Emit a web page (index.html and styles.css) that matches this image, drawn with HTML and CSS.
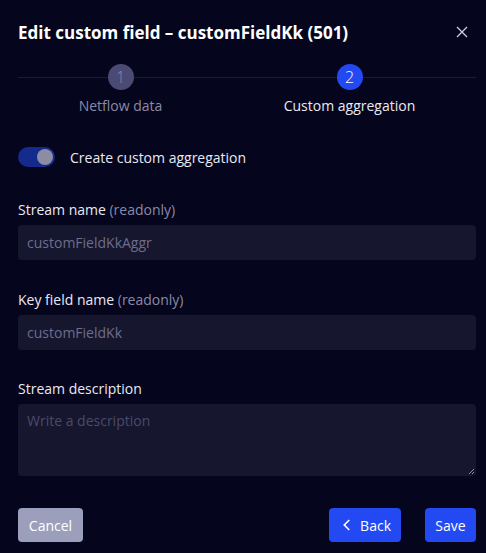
FILE: index.html
```html
<!DOCTYPE html>
<html>
<head>
<meta charset="utf-8">
<link rel="stylesheet" href="styles.css">
</head>
<body>
<div class="dialog">
  <div class="header">
    <h1 class="title">Edit custom field – customFieldKk (501)</h1>
    <svg class="close" width="12" height="12" viewBox="0 0 12 12"><path d="M1 1L11 11M11 1L1 11" stroke="#c9cadb" stroke-width="1.4" fill="none"/></svg>
  </div>
  <div class="stepper">
    <div class="step">
      <div class="circle done">1</div>
      <div class="step-label">Netflow data</div>
    </div>
    <div class="step">
      <div class="circle active">2</div>
      <div class="step-label current">Custom aggregation</div>
    </div>
  </div>
  <div class="toggle-row">
    <div class="toggle"><div class="knob"></div></div>
    <span class="toggle-label">Create custom aggregation</span>
  </div>
  <div class="field first">
    <label class="label">Stream name <span class="muted">(readonly)</span></label>
    <div class="input">customFieldKkAggr</div>
  </div>
  <div class="field second">
    <label class="label">Key field name <span class="muted">(readonly)</span></label>
    <div class="input">customFieldKk</div>
  </div>
  <div class="field third">
    <label class="label">Stream description</label>
    <div class="textarea">Write a description
      <svg class="grip" width="8" height="8" viewBox="0 0 8 8"><path d="M7 2L2 7M7 5L5 7" stroke="#8a8aa8" stroke-width="1" fill="none"/></svg>
    </div>
  </div>
  <div class="footer">
    <button class="btn cancel">Cancel</button>
    <div class="right">
      <button class="btn primary back"><svg width="10" height="14" viewBox="0 0 10 14"><path d="M8 1.5L2.5 7L8 12.5" stroke="#fff" stroke-width="1.8" fill="none"/></svg>Back</button>
      <button class="btn primary save">Save</button>
    </div>
  </div>
</div>
</body>
</html>
```
FILE: styles.css
```css
* { box-sizing: border-box; }
html, body { margin: 0; padding: 0; }
body {
  background: #05051d;
  font-family: "Open Sans", Lato, sans-serif;
  color: #e9e9f2;
  width: 486px;
  height: 553px;
  overflow: hidden;
}
.dialog {
  padding: 20px 10px 0 18px;
}
.header {
  display: flex;
  justify-content: space-between;
  align-items: center;
  height: 24px;
  padding-right: 8px;
}
.title {
  margin: 0;
  font-size: 17px;
  font-weight: 700;
  color: #ffffff;
}
.close { display: block; }
.stepper {
  margin: 20px 12px 0 -12px;
  display: grid;
  grid-template-columns: 1fr 1fr;
  position: relative;
}
.stepper::before {
  content: "";
  position: absolute;
  left: 12px;
  right: -12px;
  top: 13px;
  height: 1px;
  background: #1c1c3a;
}
.step {
  display: flex;
  flex-direction: column;
  align-items: center;
  position: relative;
}
.circle {
  width: 26px;
  height: 26px;
  border-radius: 50%;
  display: flex;
  align-items: center;
  justify-content: center;
  font-size: 16px;
  font-weight: 300;
  color: #fff;
}
.circle.done { background: #4a4a74; color: #8a8aac; }
.circle.active { background: #2349f3; }
.step-label {
  margin-top: 6px;
  font-size: 14px;
  color: #8a8aa6;
}
.step-label.current { color: #e9e9f2; }
.toggle-row {
  display: flex;
  align-items: center;
  margin-top: 32px;
  gap: 15px;
}
.toggle {
  width: 37px;
  height: 20px;
  border-radius: 10px;
  background: #142a8c;
  position: relative;
}
.knob {
  position: absolute;
  right: 2px;
  top: 2px;
  width: 16px;
  height: 16px;
  border-radius: 50%;
  background: #8c8ca2;
}
.toggle-label { font-size: 14px; color: #e9e9f2; }
.field {
  display: flex;
  flex-direction: column;
}
.field.first { margin-top: 33px; }
.field.second { margin-top: 30px; }
.field.third { margin-top: 29px; }
.label {
  font-size: 14px;
  color: #e9e9f2;
  margin-bottom: 6px;
}
.muted { color: #8a8aa6; }
.input, .textarea {
  background: #16162f;
  border-radius: 4px;
  width: 458px;
  font-size: 14px;
  color: #6d6d8c;
  padding: 0 9px;
}
.input {
  height: 35px;
  display: flex;
  align-items: center;
}
.textarea {
  height: 72px;
  padding-top: 7px;
  color: #4a4a68;
  position: relative;
}
.grip { position: absolute; right: 1px; bottom: 1px; }
.footer {
  display: flex;
  justify-content: space-between;
  margin-top: 32px;
  width: 458px;
}
.right { display: flex; gap: 24px; }
.btn {
  height: 34px;
  border: none;
  border-radius: 4px;
  font-family: inherit;
  font-size: 14px;
  color: #fff;
  padding: 0 10px;
  display: flex;
  align-items: center;
}
.cancel { background: #9c9fbc; width: 65px; justify-content: center; }
.primary { background: #2349f3; }
.back { width: 72px; gap: 9px; padding-left: 13px; }
.save { width: 51px; justify-content: center; }
```
